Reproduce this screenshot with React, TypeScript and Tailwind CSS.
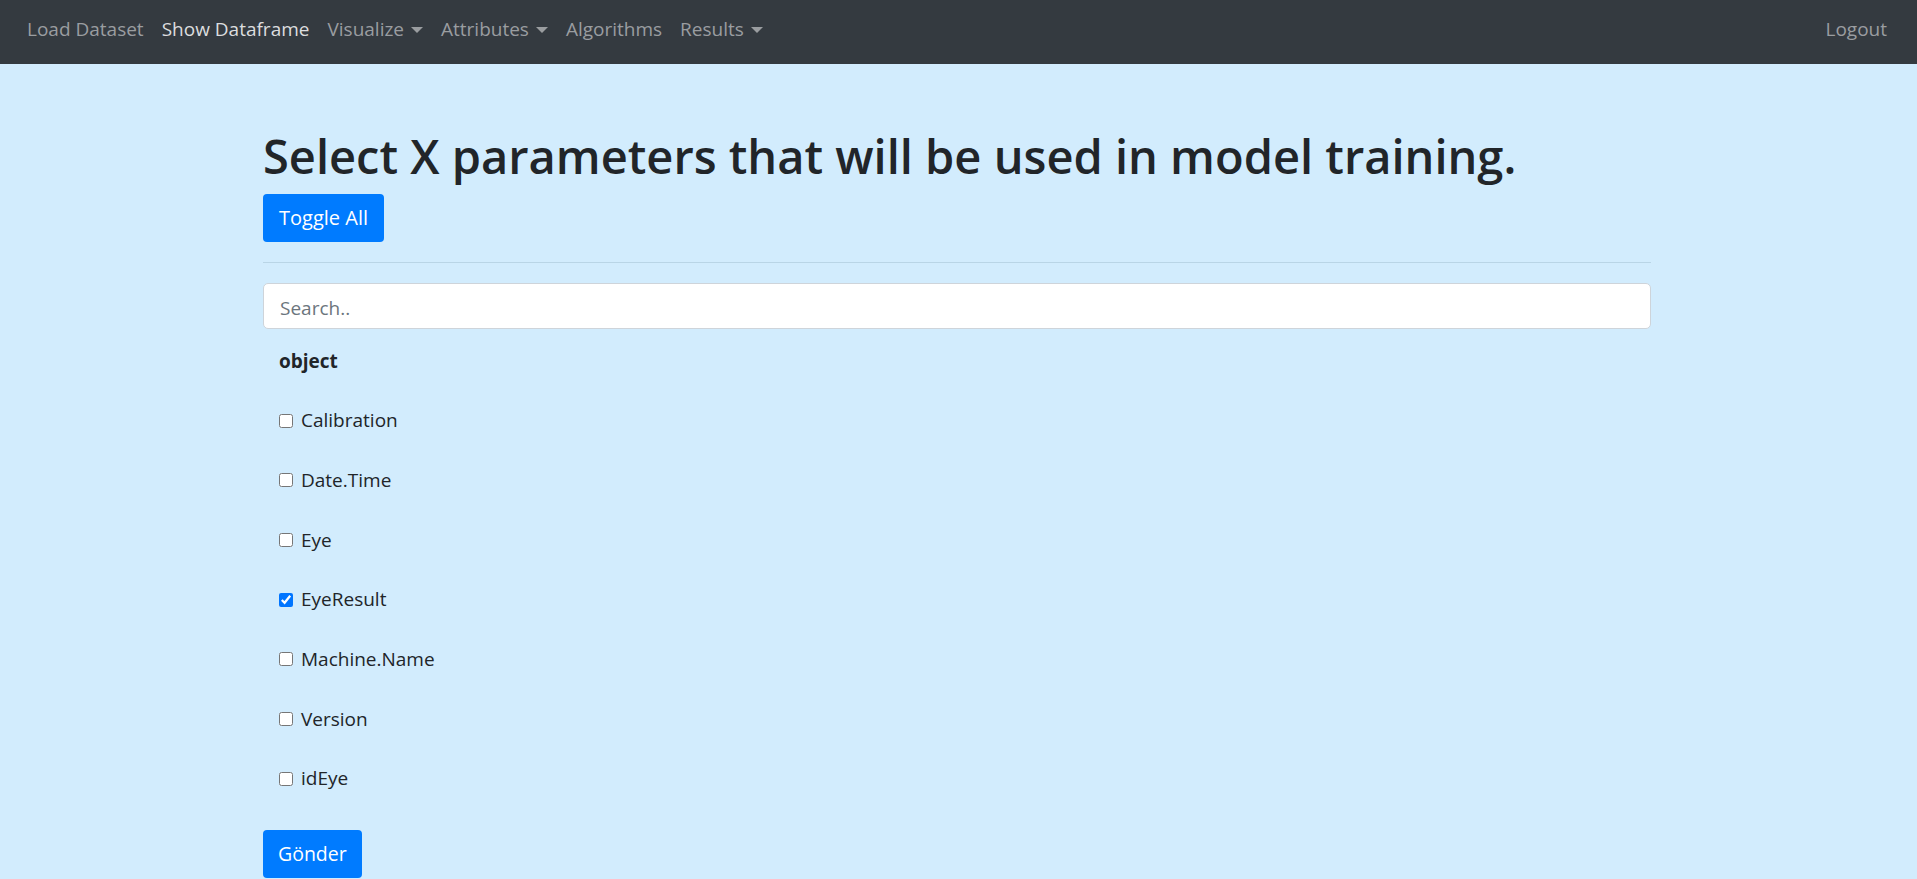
import { useState } from "react";

const navItems = [
  { label: "Load Dataset" },
  { label: "Show Dataframe", active: true },
  { label: "Visualize", dropdown: true },
  { label: "Attributes", dropdown: true },
  { label: "Algorithms" },
  { label: "Results", dropdown: true },
];

const columns = ["Calibration", "Date.Time", "Eye", "EyeResult", "Machine.Name", "Version", "idEye"];

function Caret() {
  return (
    <span className="ml-[7px] inline-block h-0 w-0 border-x-[6px] border-t-[6px] border-x-transparent border-t-current align-[3px]" />
  );
}

export default function App() {
  const [checked, setChecked] = useState<Record<string, boolean>>({ EyeResult: true });

  const toggleAll = () => {
    const allOn = columns.every((c) => checked[c]);
    const next: Record<string, boolean> = {};
    columns.forEach((c) => (next[c] = !allOn));
    setChecked(next);
  };

  return (
    <div className="min-h-[879px] bg-[#d2ecfd] font-['Open_Sans',sans-serif] text-[#212529]">
      {/* navbar */}
      <nav className="flex h-16 items-center justify-between bg-[#343a40] pl-[18px] pr-[21px] pb-[5px] text-[19px]">
        <ul className="flex items-center">
          {navItems.map((item) => (
            <li key={item.label}>
              <a
                href="#"
                className={`flex items-center px-[9px] ${item.active ? "text-[#dcdddf]" : "text-[#9a9da0]"}`}
              >
                {item.label}
                {item.dropdown && <Caret />}
              </a>
            </li>
          ))}
        </ul>
        <a href="#" className="px-[9px] text-[#9a9da0]">
          Logout
        </a>
      </nav>

      {/* content */}
      <main className="ml-[263px] w-[1388px] pt-[62px]">
        <h1 className="h-[60px] text-[47px] font-semibold leading-[60px]">
          Select X parameters that will be used in model training.
        </h1>
        <button
          onClick={toggleAll}
          className="mt-[8px] h-12 rounded-[4px] bg-[#007bff] px-4 text-[20px] text-white"
        >
          Toggle All
        </button>
        <hr className="mt-5 border-t border-[#b9d5e6]" />
        <input
          placeholder="Search.."
          className="mt-5 block h-[46px] w-full rounded-[5px] border border-[#ced4da] bg-white px-4 pt-[3px] text-[19px] placeholder:text-[#6c757d] outline-none"
        />

        <div className="mt-[2px] pl-4 text-[19px]">
          <div className="flex h-[59.7px] items-center font-bold">object</div>
          {columns.map((c) => (
            <label key={c} className="flex h-[59.7px] items-center">
              <input
                type="checkbox"
                checked={!!checked[c]}
                onChange={() => setChecked({ ...checked, [c]: !checked[c] })}
                className="m-0 h-[14px] w-[14px]"
              />
              <span className="ml-[8px]">{c}</span>
            </label>
          ))}
        </div>

        <button className="mt-[21px] h-12 rounded-[4px] bg-[#007bff] px-[15px] text-[19.5px] text-white">
          Gönder
        </button>
      </main>
    </div>
  );
}
